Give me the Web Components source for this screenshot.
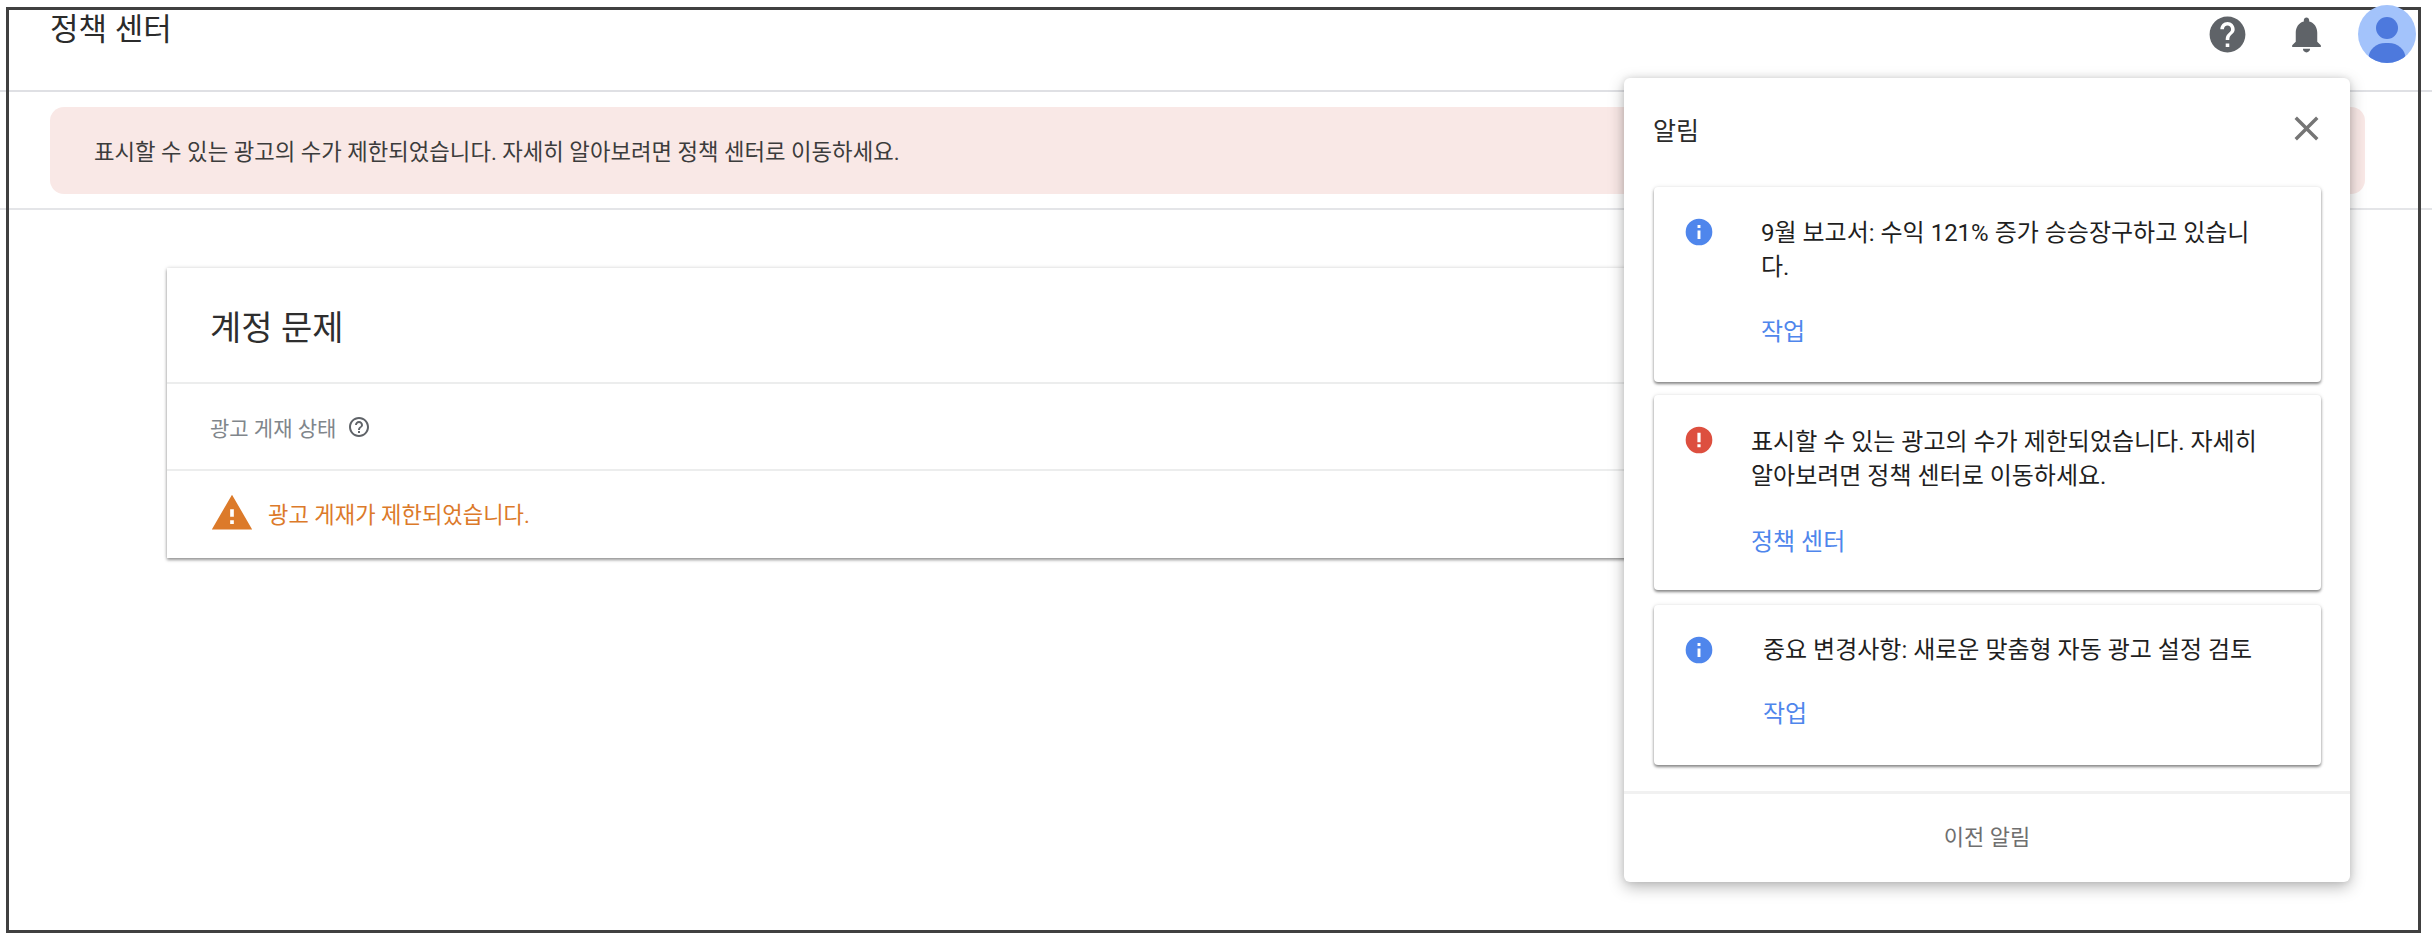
<!DOCTYPE html>
<html lang="ko">
<head>
<meta charset="utf-8">
<title>정책 센터</title>
<style>
  html, body { margin: 0; height: 942px; overflow: hidden; background: #fff; }
  body { font-family: Roboto, "Noto Sans CJK KR", sans-serif; color: #202124; }
</style>
</head>
<body>
<policy-page>
  <app-header slot="header">정책 센터</app-header>
  <alert-banner slot="banner">표시할 수 있는 광고의 수가 제한되었습니다. 자세히 알아보려면 정책 센터로 이동하세요.</alert-banner>
  <issue-card slot="main"></issue-card>
  <notification-panel slot="overlay">
    <notification-card kind="info" action="작업" style="--text-left:62px;--pad-top:29px;--action-gap:31px;--pad-bottom:33px">9월 보고서: 수익 121% 증가 승승장구하고 있습니다.</notification-card>
    <notification-card kind="error" action="정책 센터" style="--text-left:52px;--pad-top:30px;--action-gap:32px;--pad-bottom:31px;--gap-top:13px">표시할 수 있는 광고의 수가 제한되었습니다. 자세히 알아보려면 정책 센터로 이동하세요.</notification-card>
    <notification-card kind="info" action="작업" style="--text-left:64px;--pad-top:28px;--action-gap:30px;--pad-bottom:34px;--gap-top:15px">중요 변경사항: 새로운 맞춤형 자동 광고 설정 검토</notification-card>
  </notification-panel>
</policy-page>

<script>
const PATHS = {
  help: 'M12 2C6.48 2 2 6.48 2 12s4.48 10 10 10 10-4.48 10-10S17.52 2 12 2zm1 17h-2v-2h2v2zm2.07-7.75l-.9.92C13.45 12.9 13 13.5 13 15h-2v-.5c0-1.1.45-2.1 1.17-2.83l1.24-1.26c.37-.36.59-.86.59-1.41 0-1.1-.9-2-2-2s-2 .9-2 2H8c0-2.21 1.79-4 4-4s4 1.79 4 4c0 .88-.36 1.68-.93 2.25z',
  helpOutline: 'M11 18h2v-2h-2v2zm1-16C6.48 2 2 6.48 2 12s4.48 10 10 10 10-4.48 10-10S17.52 2 12 2zm0 18c-4.41 0-8-3.59-8-8s3.59-8 8-8 8 3.59 8 8-3.59 8-8 8zm0-14c-2.21 0-4 1.79-4 4h2c0-1.1.9-2 2-2s2 .9 2 2c0 2-3 1.75-3 5h2c0-2.25 3-2.5 3-5 0-2.21-1.79-4-4-4z',
  bell: 'M12 22c1.1 0 2-.9 2-2h-4c0 1.1.89 2 2 2zm6-6v-5c0-3.07-1.64-5.64-4.5-6.32V4c0-.83-.67-1.5-1.5-1.5s-1.5.67-1.5 1.5v.68C7.63 5.36 6 7.92 6 11v5l-2 2v1h16v-1l-2-2z',
  close: 'M19 6.41L17.59 5 12 10.59 6.41 5 5 6.41 10.59 12 5 17.59 6.41 19 12 13.41 17.59 19 19 17.59 13.41 12z',
  warning: 'M1 21h22L12 2 1 21zm12-3h-2v-2h2v2zm0-4h-2v-4h2v4z',
  info: 'M12 2a10 10 0 1 0 0 20 10 10 0 0 0 0-20zm1.1 15.2h-2.2v-6.4h2.2v6.4zm0-8.2h-2.2V6.8h2.2V9z',
  error: 'M12 2a10 10 0 1 0 0 20 10 10 0 0 0 0-20zm1.2 11.6h-2.4V6.6h2.4v7zm0 3.9h-2.4v-2.4h2.4v2.4z'
};

class MdIcon extends HTMLElement {
  connectedCallback() {
    const size = this.getAttribute('size') || 24;
    const color = this.getAttribute('color') || '#5f6368';
    const name = this.getAttribute('name');
    this.attachShadow({ mode: 'open' });
    this.shadowRoot.innerHTML = `
      <style>
        :host { display: block; width: ${size}px; height: ${size}px; flex: none; }
        svg { display: block; width: 100%; height: 100%; fill: ${color}; }
      </style>
      <svg viewBox="0 0 24 24"><path fill-rule="evenodd" d="${PATHS[name]}"/></svg>
    `;
  }
}

class PolicyPage extends HTMLElement {
  constructor() {
    super();
    this.attachShadow({ mode: 'open' });
    this.shadowRoot.innerHTML = `
      <style>
        :host { display: block; position: relative; height: 942px; }
        .frame {
          position: absolute; left: 6px; top: 7px; width: 2415px; height: 926px;
          box-sizing: border-box; border: 3px solid #404040;
          z-index: 1; pointer-events: none;
        }
      </style>
      <slot name="header"></slot>
      <slot name="banner"></slot>
      <slot name="main"></slot>
      <div class="frame"></div>
      <slot name="overlay"></slot>
    `;
  }
}

class AppHeader extends HTMLElement {
  constructor() {
    super();
    this.attachShadow({ mode: 'open' });
    this.shadowRoot.innerHTML = `
      <style>
        :host {
          display: flex; align-items: flex-start; box-sizing: border-box;
          height: 92px; padding: 5px 16px 0 50px;
          border-bottom: 2px solid #dfe0e4;
        }
        .title { flex: 1; font-size: 31px; line-height: 44px; margin-top: 3px; color: #2b2b2b; }
        md-icon { margin-top: 8px; }
        .bell { margin-left: 36px; }
        .avatar {
          width: 58px; height: 58px; margin-left: 30px; border-radius: 50%;
          position: relative; z-index: 2; overflow: hidden; background: #a3c3fb;
        }
        .avatar svg { display: block; }
      </style>
      <div class="title"><slot></slot></div>
      <md-icon name="help" size="43"></md-icon>
      <md-icon class="bell" name="bell" size="43"></md-icon>
      <div class="avatar">
        <svg width="58" height="58" viewBox="0 0 58 58">
          <circle cx="29" cy="23" r="11" fill="#4d79dd"/>
          <rect x="10.5" y="38" width="37" height="30" rx="17" fill="#4d79dd"/>
        </svg>
      </div>
    `;
  }
}

class AlertBanner extends HTMLElement {
  constructor() {
    super();
    this.attachShadow({ mode: 'open' });
    this.shadowRoot.innerHTML = `
      <style>
        :host {
          display: block; box-sizing: border-box; height: 118px;
          padding: 15px 67px 0 50px; border-bottom: 2px solid #e4e5e8;
        }
        .box {
          height: 87px; display: flex; align-items: center; box-sizing: border-box;
          padding: 0 44px 2px; border-radius: 14px; background: #f9e8e6;
          font-size: 22.3px; color: #3c3c3c;
        }
      </style>
      <div class="box"><span><slot></slot></span></div>
    `;
  }
}

class IssueCard extends HTMLElement {
  constructor() {
    super();
    this.attachShadow({ mode: 'open' });
    this.shadowRoot.innerHTML = `
      <style>
        :host {
          display: block; box-sizing: border-box; width: 1540px; height: 290px;
          margin: 58px 0 0 167px; background: #fff;
          box-shadow: 0 2px 3px rgba(0,0,0,.38), 0 0 4px rgba(0,0,0,.15);
        }
        .row { display: flex; align-items: center; box-sizing: border-box; padding-left: 43px; }
        .heading { height: 116px; font-size: 34px; color: #2e2e2e; border-bottom: 2px solid #eceded; }
        .label { height: 87px; font-size: 21px; color: #80868b; gap: 11px; border-bottom: 2px solid #eceded; }
        .status { height: 83px; font-size: 22.2px; color: #dc7a2a; gap: 14px; }
      </style>
      <div class="row heading">계정 문제</div>
      <div class="row label"><span>광고 게재 상태</span><md-icon name="helpOutline" size="24" color="#5f6368"></md-icon></div>
      <div class="row status"><md-icon name="warning" size="44" color="#dc7a2a"></md-icon><span>광고 게재가 제한되었습니다.</span></div>
    `;
  }
}

class NotificationPanel extends HTMLElement {
  constructor() {
    super();
    this.attachShadow({ mode: 'open' });
    this.shadowRoot.innerHTML = `
      <style>
        :host {
          position: absolute; left: 1624px; top: 78px; width: 726px; height: 804px;
          display: flex; flex-direction: column; box-sizing: border-box;
          background: #fff; border-radius: 6px; z-index: 3;
          box-shadow: 0 5px 16px rgba(0,0,0,.28), 0 0 6px rgba(0,0,0,.1);
        }
        header {
          height: 109px; flex: none; display: flex; align-items: center; justify-content: space-between;
          box-sizing: border-box; padding: 0 23px 8px 29px; font-size: 25px; color: #2b2b2b;
        }
        .list { flex: 1; padding: 0 29px 0 30px; }
        footer {
          height: 91px; flex: none; display: flex; align-items: center; justify-content: center;
          border-top: 3px solid #f1f1f1; box-sizing: border-box; padding-bottom: 7px; font-size: 22px; color: #6f6f6f;
        }
      </style>
      <header><span>알림</span><md-icon name="close" size="41" color="#757575"></md-icon></header>
      <div class="list"><slot></slot></div>
      <footer>이전 알림</footer>
    `;
  }
}

class NotificationCard extends HTMLElement {
  constructor() {
    super();
    this.attachShadow({ mode: 'open' });
  }

  connectedCallback() {
    const kind = this.getAttribute('kind');
    const color = kind === 'error' ? '#dd4f3f' : '#4f86ec';
    this.shadowRoot.innerHTML = `
      <style>
        :host {
          display: block; position: relative; box-sizing: border-box;
          margin-top: var(--gap-top, 0);
          padding: var(--pad-top) 50px var(--pad-bottom) calc(45px + var(--text-left));
          background: #fff; border-radius: 4px;
          box-shadow: 0 2px 3px rgba(0,0,0,.45), 0 0 4px rgba(0,0,0,.1);
          font-size: 24px; line-height: 34px; color: #1f1f1f;
        }
        md-icon { position: absolute; left: 29px; top: 29px; }
        .action { margin-top: var(--action-gap); color: #4f86ec; }
      </style>
      <md-icon name="${kind}" size="32" color="${color}"></md-icon>
      <div><slot></slot></div>
      <div class="action">${this.getAttribute('action')}</div>
    `;
  }
}

customElements.define('md-icon', MdIcon);
customElements.define('policy-page', PolicyPage);
customElements.define('app-header', AppHeader);
customElements.define('alert-banner', AlertBanner);
customElements.define('issue-card', IssueCard);
customElements.define('notification-panel', NotificationPanel);
customElements.define('notification-card', NotificationCard);
</script>
</body>
</html>
